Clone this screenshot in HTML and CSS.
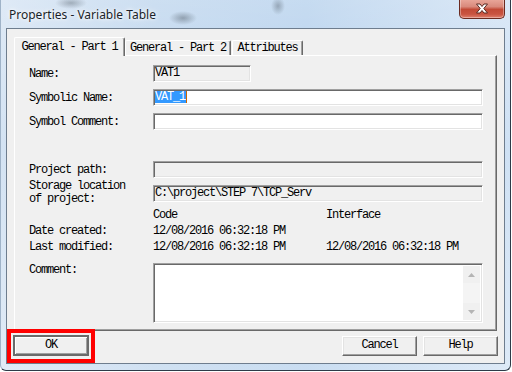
FILE: index.html
```html
<!DOCTYPE html>
<html>
<head>
    <title>Properties - Variable Table</title>
    <link rel="stylesheet" href="styles.css">
</head>
<body>
    <div class="window">
        <div class="titlebar">
            <span class="title">Properties - Variable Table</span>
            <div class="close">
                <svg width="14" height="11" viewBox="0 0 14 11">
                    <path d="M1.5 1 L5 1 L7 3.5 L9 1 L12.5 1 L8.8 5.5 L12.5 10 L9 10 L7 7.5 L5 10 L1.5 10 L5.2 5.5 Z" fill="#fff" stroke="#5a2a22" stroke-width="1" stroke-linejoin="round"/>
                </svg>
            </div>
        </div>

        <div class="client">
            <div class="tabs">
                <div class="tab active">General - Part 1</div>
                <div class="tab tab-2">General - Part 2</div>
                <div class="tab tab-3">Attributes</div>
            </div>

            <div class="panel">
                <div class="row first">
                    <span class="label">Name:</span>
                    <div class="field readonly short">VAT1</div>
                </div>
                <div class="row">
                    <span class="label">Symbolic Name:</span>
                    <div class="field"><span class="selected">VAT_1</span><span class="caret"></span></div>
                </div>
                <div class="row">
                    <span class="label">Symbol Comment:</span>
                    <div class="field"></div>
                </div>
                <div class="row gap-big">
                    <span class="label">Project path:</span>
                    <div class="field readonly"></div>
                </div>
                <div class="row tall">
                    <span class="label">Storage location<br>of project:</span>
                    <div class="field readonly">C:\project\STEP 7\TCP_Serv</div>
                </div>

                <div class="info-row header">
                    <span class="label"></span>
                    <span class="col">Code</span>
                    <span class="col">Interface</span>
                </div>
                <div class="info-row">
                    <span class="label">Date created:</span>
                    <span class="col">12/08/2016 06:32:18 PM</span>
                    <span class="col"></span>
                </div>
                <div class="info-row">
                    <span class="label">Last modified:</span>
                    <span class="col">12/08/2016 06:32:18 PM</span>
                    <span class="col">12/08/2016 06:32:18 PM</span>
                </div>

                <div class="row comment-row">
                    <span class="label">Comment:</span>
                    <div class="field memo">
                        <div class="memo-text"></div>
                        <div class="scrollbar">
                            <div class="arrow">
                                <svg width="7" height="4" viewBox="0 0 7 4"><path d="M0 4 L3.5 0 L7 4 Z" fill="#b4b4b4"/></svg>
                            </div>
                            <div class="track"></div>
                            <div class="arrow">
                                <svg width="7" height="4" viewBox="0 0 7 4"><path d="M0 0 L7 0 L3.5 4 Z" fill="#b4b4b4"/></svg>
                            </div>
                        </div>
                    </div>
                </div>
            </div>

            <div class="buttons">
                <div class="highlight">
                    <div class="button default">OK</div>
                </div>
                <div class="button-group">
                    <div class="button">Cancel</div>
                    <div class="button">Help</div>
                </div>
            </div>
        </div>
    </div>
</body>
</html>
```

FILE: styles.css
```css
body {
    margin: 0;
    background: #ffffff;
    font-family: "Liberation Mono", "DejaVu Sans Mono", monospace;
    font-size: 12px;
    letter-spacing: -1.2px;
    color: #000000;
}

.window {
    width: 511px;
    height: 371px;
    box-sizing: border-box;
    display: flex;
    flex-direction: column;
    padding: 0 5px 0 5px;
    border-right: 1px solid #2e3b48;
    border-bottom: 1px solid #2e3b48;
    border-left: 1px solid #9fb3c8;
    border-radius: 0 0 6px 6px;
    background:
        radial-gradient(ellipse 16px 6px at 70px 3px, rgba(60, 70, 80, 0.35), transparent),
        radial-gradient(ellipse 14px 7px at 182px 18px, rgba(60, 70, 80, 0.4), transparent),
        radial-gradient(ellipse 7px 9px at 277px 6px, rgba(60, 70, 80, 0.35), transparent),
        linear-gradient(180deg, rgba(255, 255, 255, 0.25), rgba(255, 255, 255, 0) 40%, rgba(255, 255, 255, 0.3)),
        linear-gradient(90deg, #d4e3f3 0%, #bcd4ed 30%, #b3cfec 60%, #cfe1f4 100%);
}

.titlebar {
    height: 28px;
    flex: none;
    display: flex;
    justify-content: space-between;
    align-items: flex-start;
}

.title {
    font-family: "Noto Sans", "Open Sans", sans-serif;
    font-size: 12px;
    letter-spacing: 0;
    color: #1a1f29;
    margin: 6px 0 0 3px;
    text-shadow: 0 0 6px #ffffff, 0 0 3px #ffffff;
}

.close {
    width: 46px;
    height: 20px;
    box-sizing: border-box;
    margin-top: -1px;
    border: 1px solid #6b2a20;
    border-top: none;
    border-radius: 0 0 5px 5px;
    background: linear-gradient(180deg, #eaa99c 0%, #d98a7c 40%, #c24a36 55%, #c95441 80%, #e0806d 100%);
    box-shadow: inset 0 0 0 1px rgba(255, 255, 255, 0.35);
    display: flex;
    justify-content: center;
    align-items: center;
}

.client {
    width: 499px;
    height: 336px;
    box-sizing: border-box;
    border: 1px solid #6e7d8e;
    background: #f0f0f0;
    padding: 8px 7px 0 7px;
    display: flex;
    flex-direction: column;
}

.tabs {
    height: 18px;
    display: flex;
    align-items: flex-end;
}

.tab {
    box-sizing: border-box;
    height: 15px;
    background: #f0f0f0;
    border-top: 1px solid #ffffff;
    border-left: 1px solid #ffffff;
    border-right: 1px solid #696969;
    box-shadow: inset -1px 0 #a0a0a0;
    border-radius: 2px 2px 0 0;
    text-align: center;
    line-height: 12px;
    padding-top: 1px;
    white-space: nowrap;
}

.tab.active {
    width: 111px;
    height: 19px;
    margin-bottom: -1px;
    padding-top: 3px;
    position: relative;
    z-index: 1;
}

.tab-2 {
    width: 106px;
}

.tab-3 {
    width: 71px;
    margin-left: 1px;
}

.panel {
    width: 483px;
    height: 277px;
    box-sizing: border-box;
    border-top: 1px solid #ffffff;
    border-left: 1px solid #ffffff;
    border-right: 1px solid #696969;
    border-bottom: 1px solid #696969;
    box-shadow: inset -1px -1px #a0a0a0;
    padding: 0 12px 0 14px;
    display: flex;
    flex-direction: column;
}

.row {
    display: flex;
    align-items: center;
    height: 17px;
    margin-top: 7px;
}

.row.first {
    margin-top: 9px;
}

.row.gap-big {
    margin-top: 31px;
}

.row.tall {
    height: 26px;
    margin-top: 2px;
}

.row.tall .label {
    line-height: 13px;
}

.label {
    width: 124px;
    flex: none;
    line-height: 12px;
    white-space: nowrap;
}

.field {
    width: 330px;
    height: 17px;
    box-sizing: border-box;
    border: 1px solid;
    border-color: #a0a0a0 #ffffff #ffffff #a0a0a0;
    box-shadow: inset 1px 1px #696969, inset -1px -1px #e3e3e3;
    background: #ffffff;
    padding: 1px 0 0 1px;
    line-height: 13px;
    white-space: nowrap;
    display: flex;
    align-items: flex-start;
}

.field.readonly {
    background: #f0f0f0;
}

.field.short {
    width: 98px;
}

.selected {
    background: #3399ff;
    color: #ffffff;
    line-height: 12px;
    padding-right: 1px;
}

.caret {
    width: 1px;
    height: 12px;
    background: #cc6600;
}

.info-row {
    display: flex;
    height: 12px;
    line-height: 12px;
    margin-top: 4px;
}

.info-row.header {
    margin-top: 3px;
}

.col {
    width: 173px;
    flex: none;
    white-space: nowrap;
}

.comment-row {
    align-items: flex-start;
    height: 60px;
    margin-top: 10px;
}

.comment-row .label {
    margin-top: 1px;
}

.field.memo {
    height: 60px;
    padding: 2px;
}

.memo-text {
    flex: 1;
}

.scrollbar {
    width: 17px;
    height: 100%;
    background: #f0f0f0;
    display: flex;
    flex-direction: column;
}

.arrow {
    height: 17px;
    display: flex;
    justify-content: center;
    align-items: center;
}

.track {
    flex: 1;
    background: #f4f4f4;
}

.buttons {
    display: flex;
    justify-content: space-between;
    align-items: flex-start;
}

.highlight {
    margin: -2px 0 0 -7px;
    border: 4px solid #ff0000;
    padding: 2px 2px 3px 2px;
}

.button {
    width: 75px;
    height: 20px;
    box-sizing: border-box;
    background: #f0f0f0;
    border: 1px solid;
    border-color: #ffffff #696969 #696969 #ffffff;
    box-shadow: inset -1px -1px #a0a0a0, inset 1px 1px #e3e3e3;
    text-align: center;
    line-height: 17px;
}

.button.default {
    width: 76px;
    height: 21px;
    border: 2px solid #6a6a6a;
    box-shadow: inset 1px 1px #ffffff, inset -1px -1px #a0a0a0;
    line-height: 17px;
}

.button-group {
    display: flex;
    gap: 6px;
    margin: 5px -1px 0 0;
}
```
